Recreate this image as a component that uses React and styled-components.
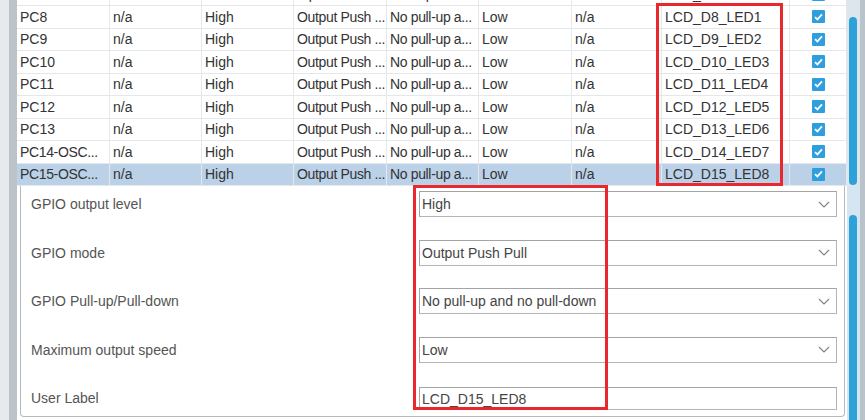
import React from 'react';
import styled, { createGlobalStyle } from 'styled-components';

const GlobalStyle = createGlobalStyle`
  html, body {
    margin: 0;
    padding: 0;
    background: #fff;
  }
  body {
    font-family: "Liberation Sans", Arial, sans-serif;
  }
`;

const COLS = '93px 92px 92px 93px 92px 93px 90px 128px 57px';

const rows = [
  ['PC7', 'n/a', 'n/a', 'Input mode', 'Pull-up', 'n/a', 'n/a', 'LCD_D7'],
  ['PC8', 'n/a', 'High', 'Output Push ...', 'No pull-up a...', 'Low', 'n/a', 'LCD_D8_LED1'],
  ['PC9', 'n/a', 'High', 'Output Push ...', 'No pull-up a...', 'Low', 'n/a', 'LCD_D9_LED2'],
  ['PC10', 'n/a', 'High', 'Output Push ...', 'No pull-up a...', 'Low', 'n/a', 'LCD_D10_LED3'],
  ['PC11', 'n/a', 'High', 'Output Push ...', 'No pull-up a...', 'Low', 'n/a', 'LCD_D11_LED4'],
  ['PC12', 'n/a', 'High', 'Output Push ...', 'No pull-up a...', 'Low', 'n/a', 'LCD_D12_LED5'],
  ['PC13', 'n/a', 'High', 'Output Push ...', 'No pull-up a...', 'Low', 'n/a', 'LCD_D13_LED6'],
  ['PC14-OSC...', 'n/a', 'High', 'Output Push ...', 'No pull-up a...', 'Low', 'n/a', 'LCD_D14_LED7'],
  ['PC15-OSC...', 'n/a', 'High', 'Output Push ...', 'No pull-up a...', 'Low', 'n/a', 'LCD_D15_LED8'],
];

const fields = [
  { label: 'GPIO output level', value: 'High' },
  { label: 'GPIO mode', value: 'Output Push Pull' },
  { label: 'GPIO Pull-up/Pull-down', value: 'No pull-up and no pull-down' },
  { label: 'Maximum output speed', value: 'Low' },
  { label: 'User Label', value: 'LCD_D15_LED8', text: true },
];

const Screen = styled.div`
  position: relative;
  display: flex;
  width: 865px;
  height: 420px;
  overflow: hidden;
  background: #fff;
`;

const LeftGutter = styled.div`
  width: 17px;
  flex: none;
  background: linear-gradient(to right, #e6eaec 0 9px, #bbc4ca 9px 17px);
`;

const RightGutter = styled.div`
  width: 5px;
  flex: none;
  background: #bac3c9;
`;

const Main = styled.div`
  flex: 1;
  display: flex;
  flex-direction: column;
  min-width: 0;
`;

const TableArea = styled.div`
  display: flex;
  margin-top: -16.5px;
  height: 202.5px;
  flex: none;
`;

const Table = styled.div`
  width: 830px;
`;

const Row = styled.div`
  display: grid;
  grid-template-columns: ${COLS};
  height: 22.5px;
  background: ${(p) => (p.$selected ? '#bad1e8' : '#fff')};
`;

const Cell = styled.div`
  display: flex;
  align-items: center;
  padding: 0 2px 0 3px;
  font-size: 14px;
  color: #333;
  white-space: nowrap;
  overflow: hidden;
  letter-spacing: ${(p) => (p.$tight ? '-0.35px' : 'normal')};
  border-right: 1px solid #e4e8eb;
  border-bottom: 1px solid #e4e8eb;
  justify-content: ${(p) => (p.$center ? 'center' : 'flex-start')};
`;

const Check = styled.span`
  display: flex;
  align-items: center;
  justify-content: center;
  width: 13px;
  height: 13px;
  background: #2d9fde;
  border-radius: 1px;
`;

const ScrollTrack = styled.div`
  position: relative;
  width: 13px;
  flex: none;
  background: ${(p) => p.$bg};
`;

const Thumb = styled.div`
  position: absolute;
  left: 2px;
  width: 8px;
  top: ${(p) => p.$top}px;
  bottom: ${(p) => p.$bottom}px;
  border-radius: 4px;
  background: #2ea0da;
`;

const DetailArea = styled.div`
  flex: 1;
  display: flex;
  min-height: 0;
`;

const PanelWrap = styled.div`
  width: 830px;
  padding: 0 2px 3px 3px;
  box-sizing: border-box;
  display: flex;
`;

const Panel = styled.div`
  flex: 1;
  border: 1px solid #b3babf;
  border-top: none;
  border-radius: 0 0 4px 4px;
  padding: 5px 7px 0 10px;
  display: flex;
  flex-direction: column;
  gap: 22.5px;
`;

const FieldRow = styled.div`
  display: grid;
  grid-template-columns: 388px 1fr;
  align-items: center;
  height: 26px;
`;

const Label = styled.div`
  font-size: 14px;
  color: #555;
  white-space: nowrap;
`;

const Select = styled.div`
  display: flex;
  align-items: center;
  justify-content: space-between;
  height: ${(p) => (p.$text ? 23 : 26)}px;
  box-sizing: border-box;
  border: 1px solid #b4b4b4;
  border-top-color: #a4a4a4;
  border-left-color: #a4a4a4;
  background: #fff;
  padding: 0 6px 0 2px;
  font-size: 14px;
  color: #444;
  white-space: nowrap;
  margin-top: ${(p) => (p.$text ? 1 : 0)}px;
`;

const Annotation = styled.div`
  position: absolute;
  left: ${(p) => p.$x}px;
  top: ${(p) => p.$y}px;
  width: ${(p) => p.$w}px;
  height: ${(p) => p.$h}px;
  box-sizing: border-box;
  border: 3px solid #e8282d;
  pointer-events: none;
`;

const CheckIcon = () => (
  <Check>
    <svg width="9" height="8" viewBox="0 0 9 8">
      <polyline points="1,4.2 3.4,6.4 8,1.4" fill="none" stroke="#fff" strokeWidth="1.8" />
    </svg>
  </Check>
);

const Chevron = () => (
  <svg width="12" height="7" viewBox="0 0 12 7">
    <polyline points="1,1 6,6 11,1" fill="none" stroke="#808080" strokeWidth="1.1" />
  </svg>
);

export default function App() {
  return (
    <Screen>
      <GlobalStyle />
      <LeftGutter />
      <Main>
        <TableArea>
          <Table>
            {rows.map((r, i) => (
              <Row key={i} $selected={i === rows.length - 1}>
                {r.map((c, j) => (
                  <Cell key={j} $tight={c.endsWith('...')}>{c}</Cell>
                ))}
                <Cell $center>
                  <CheckIcon />
                </Cell>
              </Row>
            ))}
          </Table>
          <ScrollTrack $bg="#dde6ed">
            <Thumb $top={33.5} $bottom={1} />
          </ScrollTrack>
        </TableArea>
        <DetailArea>
          <PanelWrap>
            <Panel>
              {fields.map((f) => (
                <FieldRow key={f.label}>
                  <Label>{f.label}</Label>
                  <Select $text={f.text}>
                    <span>{f.value}</span>
                    {!f.text && <Chevron />}
                  </Select>
                </FieldRow>
              ))}
            </Panel>
          </PanelWrap>
          <ScrollTrack $bg="#d6e5f2">
            <Thumb $top={29} $bottom={-10} />
          </ScrollTrack>
        </DetailArea>
      </Main>
      <RightGutter />
      <Annotation $x={656} $y={3} $w={127} $h={183} />
      <Annotation $x={413} $y={185} $w={195} $h={225} />
    </Screen>
  );
}
